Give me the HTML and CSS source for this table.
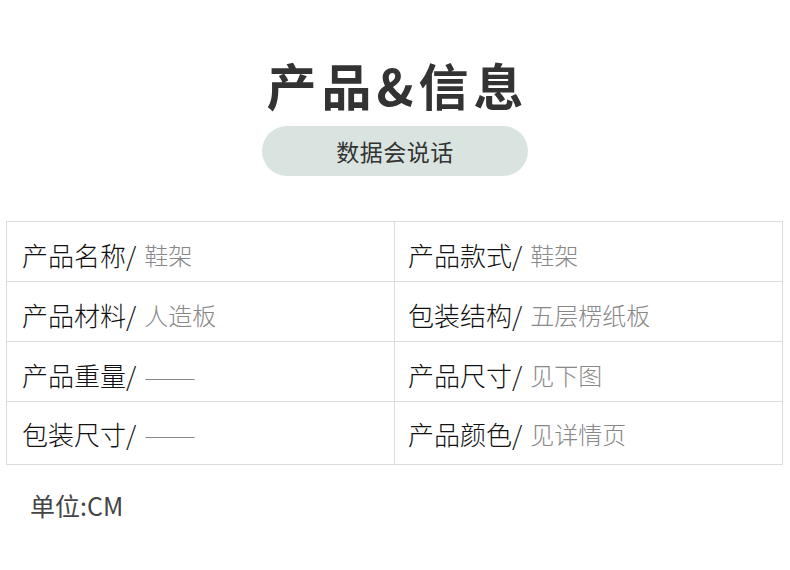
FILE: index.html
```html
<!DOCTYPE html>
<html lang="zh">
<head>
<meta charset="utf-8">
<link rel="stylesheet" href="styles.css">
</head>
<body>
<div class="page">
  <h1 class="title">产品&amp;信息</h1>
  <div class="pill">数据会说话</div>
  <div class="table">
    <div class="cell"><span class="label">产品名称/</span><span class="value">鞋架</span></div>
    <div class="cell"><span class="label">产品款式/</span><span class="value">鞋架</span></div>
    <div class="cell"><span class="label">产品材料/</span><span class="value">人造板</span></div>
    <div class="cell"><span class="label">包装结构/</span><span class="value">五层楞纸板</span></div>
    <div class="cell"><span class="label">产品重量/</span><span class="value dash">——</span></div>
    <div class="cell"><span class="label">产品尺寸/</span><span class="value">见下图</span></div>
    <div class="cell tall"><span class="label">包装尺寸/</span><span class="value dash">——</span></div>
    <div class="cell tall"><span class="label">产品颜色/</span><span class="value">见详情页</span></div>
  </div>
  <div class="unit">单位:CM</div>
</div>
</body>
</html>
```
FILE: styles.css
```css
html, body {
  margin: 0;
  padding: 0;
  background: #fff;
}
body {
  font-family: "Noto Sans CJK SC", "Noto Sans", sans-serif;
  color: #222;
}
.page {
  width: 790px;
  display: flex;
  flex-direction: column;
  align-items: center;
}
.title {
  margin: 52px 0 0 0;
  font-size: 50px;
  font-weight: 700;
  letter-spacing: 5px;
  line-height: 64px;
  color: #333;
  padding-left: 5px;
}
.pill {
  margin-top: 10px;
  width: 266px;
  height: 50px;
  border-radius: 25px;
  background: #d9e4e0;
  color: #333;
  font-size: 23px;
  font-weight: 400;
  letter-spacing: 0.5px;
  display: flex;
  align-items: center;
  justify-content: center;
}
.table {
  margin-top: 45px;
  width: 776px;
  align-self: flex-start;
  margin-left: 6px;
  display: grid;
  grid-template-columns: 388px 388px;
  border-top: 1px solid #dcdcdc;
  border-left: 1px solid #dcdcdc;
}
.cell {
  height: 60px;
  box-sizing: border-box;
  border-right: 1px solid #dcdcdc;
  border-bottom: 1px solid #dcdcdc;
  display: flex;
  align-items: center;
  padding-left: 15px;
  padding-top: 6px;
}
.cell:nth-child(2n) {
  padding-left: 13px;
}
.cell.tall {
  height: 63px;
  padding-top: 0;
}
.label {
  font-size: 26px;
  font-weight: 300;
  color: #111;
}
.value {
  font-size: 24px;
  font-weight: 300;
  color: #888;
  margin-left: 8px;
}
.value.dash {
  display: inline-block;
  margin-left: 8px;
  font-size: 25px;
  transform: scaleX(1.25);
  transform-origin: left center;
}
.unit {
  align-self: flex-start;
  margin: 22px 0 0 30px;
  font-size: 25px;
  font-weight: 400;
  color: #444;
}
```
